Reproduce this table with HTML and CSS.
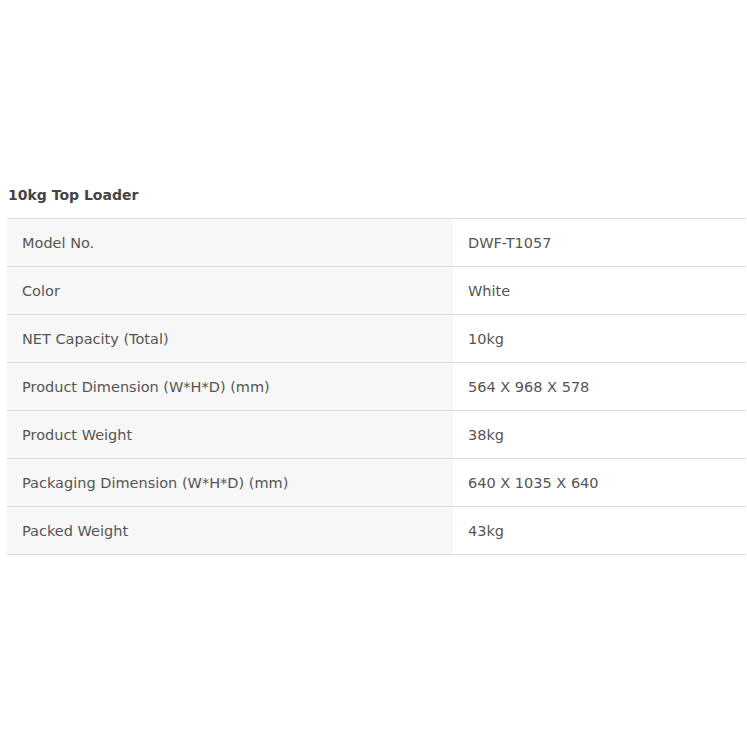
FILE: index.html
```html
<!DOCTYPE html>
<html>
<head>
<meta charset="utf-8">
<link rel="stylesheet" href="styles.css">
</head>
<body>
<div class="spec">
  <h3 class="spec-title">10kg Top Loader</h3>
  <table class="spec-table">
    <tr><th>Model No.</th><td>DWF-T1057</td></tr>
    <tr><th>Color</th><td>White</td></tr>
    <tr><th>NET Capacity (Total)</th><td>10kg</td></tr>
    <tr><th>Product Dimension (W*H*D) (mm)</th><td>564 X 968 X 578</td></tr>
    <tr><th>Product Weight</th><td>38kg</td></tr>
    <tr><th>Packaging Dimension (W*H*D) (mm)</th><td>640 X 1035 X 640</td></tr>
    <tr><th>Packed Weight</th><td>43kg</td></tr>
  </table>
</div>
</body>
</html>
```
FILE: styles.css
```css
html, body {
  margin: 0;
  padding: 0;
  background: #fff;
}
body {
  font-family: "DejaVu Sans", Verdana, sans-serif;
  color: #555;
}
.spec {
  padding: 184px 1px 0 7px;
}
.spec-title {
  margin: 0 0 12px 1px;
  font-size: 14px;
  font-weight: bold;
  color: #444;
  line-height: 22px;
}
.spec-table {
  width: 100%;
  border-collapse: collapse;
  border-top: 1px solid #ddd;
}
.spec-table tr {
  border-bottom: 1px solid #ddd;
}
.spec-table th,
.spec-table td {
  height: 47px;
  padding: 0 15px;
  font-size: 14.5px;
  font-weight: normal;
  text-align: left;
  vertical-align: middle;
  color: #555;
}
.spec-table th {
  width: 416px;
  background: #f7f7f7;
}
.spec-table td {
  background: #fff;
}
```
